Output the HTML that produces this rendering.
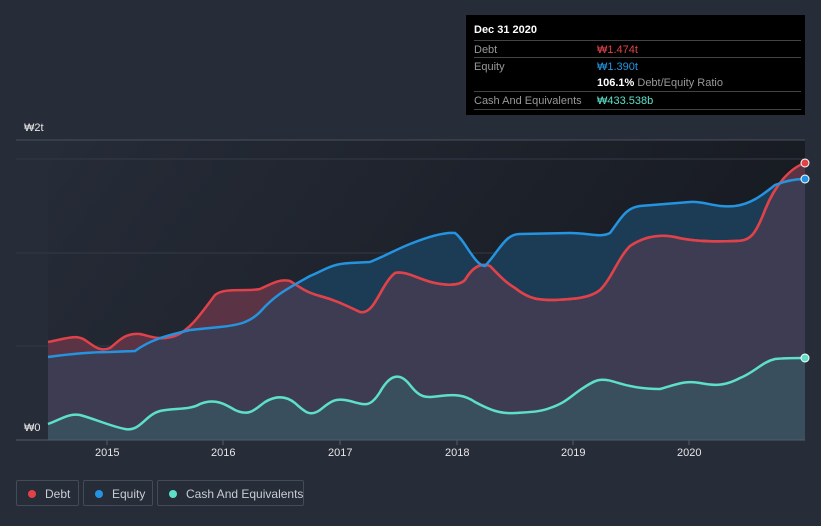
<!DOCTYPE html>
<html><head><meta charset="utf-8"><style>
body{margin:0;width:821px;height:526px;background:#262c38;font-family:"Liberation Sans","Noto Sans CJK KR",sans-serif;overflow:hidden;position:relative}
.tip{position:absolute;left:466px;top:15px;width:339px;height:100px;background:#000;color:#fff;font-size:11px}
.tip .r{position:absolute;left:8px;width:327px;border-top:1px solid #444;height:18px;line-height:18px;color:#999}
.tip .v{position:absolute;left:123px}
.leg{position:absolute;top:480px;height:26px;border:1px solid #444b57;border-radius:2px;color:#c9ccd2;font-size:12px;line-height:26px;box-sizing:border-box;white-space:nowrap}
.leg i{position:absolute;left:11px;top:9px;width:8px;height:8px;border-radius:50%}
.ax{position:absolute;color:#e6e6e6;font-size:11px}
</style></head><body>
<svg width="821" height="526" style="position:absolute;left:0;top:0">
<defs>
<clipPath id="ce"><path d="M48,357 C70,354 90,352 110,352 L135,351 C150,340 165,336 190,330 L220,327 C240,325 250,322 260,312 C275,295 285,290 310,276 C325,270 330,264 350,263 L370,262 C385,256 395,250 410,244 C430,236 445,232 455,233 C465,240 475,266 485,266 C500,250 505,234 520,234 L570,233 C590,233 600,238 610,233 C620,220 625,208 640,206 L690,202 C705,201 715,208 735,206 C750,204 760,197 775,185 C785,181 795,179 805,179 L805,440 L48,440 Z"/></clipPath>
<linearGradient id="bg" x1="0" y1="0" x2="1" y2="0.3"><stop offset="0" stop-color="#262c38"/><stop offset="1" stop-color="#171a21"/></linearGradient>
</defs>
<rect x="48" y="140" width="757" height="300" fill="url(#bg)"/>
<g stroke="#333a47" stroke-width="1">
<line x1="16" y1="159" x2="805" y2="159"/><line x1="16" y1="253" x2="805" y2="253"/><line x1="16" y1="346" x2="805" y2="346"/>
</g>
<line x1="16" y1="140" x2="805" y2="140" stroke="#4a505c"/>
<path d="M48,357 C70,354 90,352 110,352 L135,351 C150,340 165,336 190,330 L220,327 C240,325 250,322 260,312 C275,295 285,290 310,276 C325,270 330,264 350,263 L370,262 C385,256 395,250 410,244 C430,236 445,232 455,233 C465,240 475,266 485,266 C500,250 505,234 520,234 L570,233 C590,233 600,238 610,233 C620,220 625,208 640,206 L690,202 C705,201 715,208 735,206 C750,204 760,197 775,185 C785,181 795,179 805,179 L805,440 L48,440 Z" fill="#1c3b55"/>
<path d="M48,342 C65,339 75,334 85,340 C95,347 100,352 110,348 C120,340 125,333 140,334 C150,336 160,341 175,336 C190,330 200,315 215,295 C225,287 245,292 260,289 C275,282 280,279 290,281 C300,287 305,292 320,296 C335,300 345,305 360,312 C375,315 380,285 395,273 C405,270 420,280 435,283 C450,286 460,285 465,280 C472,268 480,262 490,266 C500,276 505,282 515,288 C530,300 540,300 555,300 C575,299 590,298 600,290 C612,278 618,258 630,246 C645,236 660,234 675,237 C690,241 710,242 735,241 C750,241 755,236 765,210 C775,185 790,168 805,163 L805,440 L48,440 Z" fill="#5a3344"/>
<path d="M48,342 C65,339 75,334 85,340 C95,347 100,352 110,348 C120,340 125,333 140,334 C150,336 160,341 175,336 C190,330 200,315 215,295 C225,287 245,292 260,289 C275,282 280,279 290,281 C300,287 305,292 320,296 C335,300 345,305 360,312 C375,315 380,285 395,273 C405,270 420,280 435,283 C450,286 460,285 465,280 C472,268 480,262 490,266 C500,276 505,282 515,288 C530,300 540,300 555,300 C575,299 590,298 600,290 C612,278 618,258 630,246 C645,236 660,234 675,237 C690,241 710,242 735,241 C750,241 755,236 765,210 C775,185 790,168 805,163 L805,440 L48,440 Z" fill="#3d3c53" clip-path="url(#ce)"/>
<path d="M48,424 C60,420 68,413 80,415 C95,419 110,426 125,429 C140,432 145,415 160,411 C175,408 190,410 200,404 C215,398 225,404 235,410 C250,417 255,409 265,402 C275,396 285,395 295,403 C305,412 310,417 320,410 C330,402 335,397 350,401 C365,405 370,408 380,392 C390,374 400,372 410,385 C420,398 425,398 440,396 C455,394 465,395 475,402 C490,410 500,414 515,413 C530,412 540,412 550,408 C565,403 570,397 580,390 C595,380 600,377 615,382 C630,387 645,389 660,389 C675,385 685,380 700,383 C715,386 725,386 740,378 C755,372 762,362 775,359 C785,358 795,358 805,358 L805,440 L48,440 Z" fill="#3a5560" fill-opacity="0.75"/>
<g id="dl"><path id="dp" d="M48,342 C65,339 75,334 85,340 C95,347 100,352 110,348 C120,340 125,333 140,334 C150,336 160,341 175,336 C190,330 200,315 215,295 C225,287 245,292 260,289 C275,282 280,279 290,281 C300,287 305,292 320,296 C335,300 345,305 360,312 C375,315 380,285 395,273 C405,270 420,280 435,283 C450,286 460,285 465,280 C472,268 480,262 490,266 C500,276 505,282 515,288 C530,300 540,300 555,300 C575,299 590,298 600,290 C612,278 618,258 630,246 C645,236 660,234 675,237 C690,241 710,242 735,241 C750,241 755,236 765,210 C775,185 790,168 805,163" fill="none" stroke="#e0424a" stroke-width="2.5"/></g>
<use href="#dp" stroke="#b04e60" clip-path="url(#ce)" style="stroke:#b04e60"/>
<path d="M48,357 C70,354 90,352 110,352 L135,351 C150,340 165,336 190,330 L220,327 C240,325 250,322 260,312 C275,295 285,290 310,276 C325,270 330,264 350,263 L370,262 C385,256 395,250 410,244 C430,236 445,232 455,233 C465,240 475,266 485,266 C500,250 505,234 520,234 L570,233 C590,233 600,238 610,233 C620,220 625,208 640,206 L690,202 C705,201 715,208 735,206 C750,204 760,197 775,185 C785,181 795,179 805,179" fill="none" stroke="#2594e0" stroke-width="2.5"/>
<path d="M48,424 C60,420 68,413 80,415 C95,419 110,426 125,429 C140,432 145,415 160,411 C175,408 190,410 200,404 C215,398 225,404 235,410 C250,417 255,409 265,402 C275,396 285,395 295,403 C305,412 310,417 320,410 C330,402 335,397 350,401 C365,405 370,408 380,392 C390,374 400,372 410,385 C420,398 425,398 440,396 C455,394 465,395 475,402 C490,410 500,414 515,413 C530,412 540,412 550,408 C565,403 570,397 580,390 C595,380 600,377 615,382 C630,387 645,389 660,389 C675,385 685,380 700,383 C715,386 725,386 740,378 C755,372 762,362 775,359 C785,358 795,358 805,358" fill="none" stroke="#5ee0c8" stroke-width="2.5"/>
<circle cx="805" cy="163" r="4" fill="#e0424a" stroke="#fff" stroke-width="1"/>
<circle cx="805" cy="179" r="4" fill="#2594e0" stroke="#fff" stroke-width="1"/>
<circle cx="805" cy="358" r="4" fill="#5ee0c8" stroke="#fff" stroke-width="1"/>
<line x1="16" y1="440" x2="805" y2="440" stroke="#555c68"/>
<g stroke="#555c68"><line x1="107" y1="440" x2="107" y2="445"/><line x1="223" y1="440" x2="223" y2="445"/><line x1="340" y1="440" x2="340" y2="445"/><line x1="457" y1="440" x2="457" y2="445"/><line x1="573" y1="440" x2="573" y2="445"/><line x1="689" y1="440" x2="689" y2="445"/></g>
</svg>
<div class="ax" style="left:24px;top:122px">₩2t</div>
<div class="ax" style="left:24px;top:422px">₩0</div>
<div class="ax" style="left:95px;top:447px">2015</div>
<div class="ax" style="left:211px;top:447px">2016</div>
<div class="ax" style="left:328px;top:447px">2017</div>
<div class="ax" style="left:445px;top:447px">2018</div>
<div class="ax" style="left:561px;top:447px">2019</div>
<div class="ax" style="left:677px;top:447px">2020</div>
<div class="tip">
<div style="position:absolute;left:8px;top:9px;font-weight:bold">Dec 31 2020</div>
<div class="r" style="top:25px">Debt<span class="v" style="color:#e0424a">₩1.474t</span></div>
<div class="r" style="top:42px">Equity<span class="v" style="color:#2594e0">₩1.390t</span></div>
<div class="r" style="top:59px;border-top:none"><span class="v"><b style="color:#fff">106.1%</b> Debt/Equity Ratio</span></div>
<div class="r" style="top:76px">Cash And Equivalents<span class="v" style="color:#5ee0c8">₩433.538b</span></div>
<div class="r" style="top:94px;height:0"></div>
</div>
<div class="leg" style="left:16px;width:63px"><i style="background:#e0424a"></i><span style="margin-left:28px">Debt</span></div>
<div class="leg" style="left:83px;width:70px"><i style="background:#2594e0"></i><span style="margin-left:28px">Equity</span></div>
<div class="leg" style="left:157px;width:147px"><i style="background:#5ee0c8"></i><span style="margin-left:28px">Cash And Equivalents</span></div>
</body></html>
